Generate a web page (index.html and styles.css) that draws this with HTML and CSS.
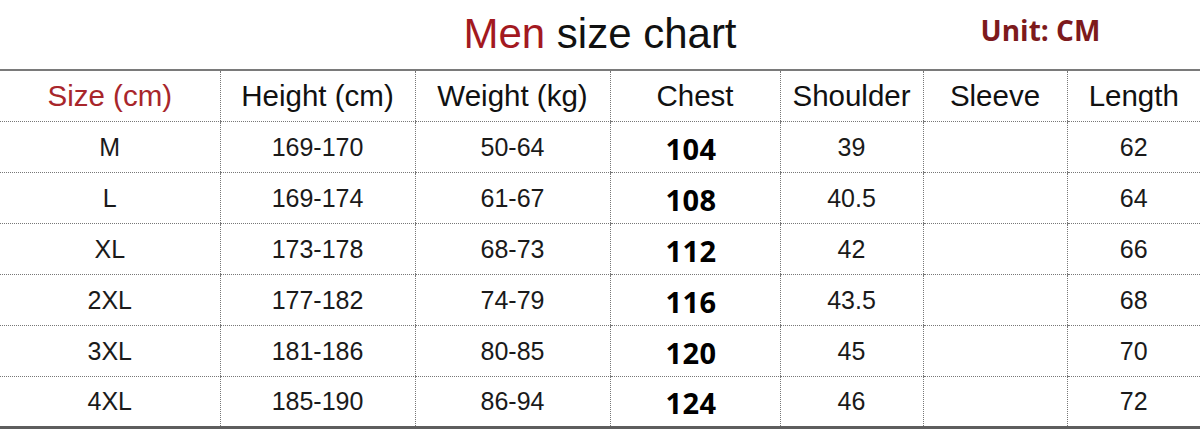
FILE: index.html
```html
<!DOCTYPE html>
<html>
<head>
<meta charset="utf-8">
<link rel="stylesheet" href="styles.css">
</head>
<body>
<div class="page">
  <header class="head">
    <div></div>
    <h1 class="title"><span class="red">Men</span> size chart</h1>
    <div class="unit">Unit: CM</div>
  </header>
  <table class="chart">
    <colgroup>
      <col class="c1"><col class="c2"><col class="c3"><col class="c4"><col class="c5"><col class="c6"><col class="c7">
    </colgroup>
    <thead>
      <tr>
        <th class="first">Size (cm)</th><th>Height (cm)</th><th>Weight (kg)</th><th>Chest</th><th>Shoulder</th><th>Sleeve</th><th>Length</th>
      </tr>
    </thead>
    <tbody>
      <tr><td>M</td><td>169-170</td><td>50-64</td><td class="bold">104</td><td>39</td><td></td><td>62</td></tr>
      <tr><td>L</td><td>169-174</td><td>61-67</td><td class="bold">108</td><td>40.5</td><td></td><td>64</td></tr>
      <tr><td>XL</td><td>173-178</td><td>68-73</td><td class="bold">112</td><td>42</td><td></td><td>66</td></tr>
      <tr><td>2XL</td><td>177-182</td><td>74-79</td><td class="bold">116</td><td>43.5</td><td></td><td>68</td></tr>
      <tr><td>3XL</td><td>181-186</td><td>80-85</td><td class="bold">120</td><td>45</td><td></td><td>70</td></tr>
      <tr><td>4XL</td><td>185-190</td><td>86-94</td><td class="bold">124</td><td>46</td><td></td><td>72</td></tr>
    </tbody>
  </table>
</div>
</body>
</html>
```
FILE: styles.css
```css
html, body {
  margin: 0;
  padding: 0;
  background: #ffffff;
}
.page {
  width: 1200px;
  height: 430px;
  overflow: hidden;
  font-family: "Liberation Sans", Arial, sans-serif;
  color: #111;
}
.head {
  height: 69px;
  display: grid;
  grid-template-columns: 1fr auto 1fr;
  align-items: start;
}
.title {
  margin: 0;
  padding-top: 10px;
  font-weight: normal;
  font-size: 42px;
  line-height: 48px;
  color: #111;
}
.red {
  color: #a3191f;
}
.unit {
  padding-left: 244px;
  padding-top: 13px;
  font-family: "Open Sans", sans-serif;
  font-weight: bold;
  font-size: 28px;
  line-height: 34px;
  color: #7d1a1c;
  white-space: nowrap;
}
.chart {
  width: 1200px;
  table-layout: fixed;
  border-collapse: collapse;
  border-top: 2px solid #7a7a7a;
  border-bottom: 3px solid #5e5e5e;
}
.c1 { width: 220px; }
.c2 { width: 195px; }
.c3 { width: 195px; }
.c4 { width: 170px; }
.c5 { width: 143px; }
.c6 { width: 144px; }
.c7 { width: 133px; }
th, td {
  box-sizing: border-box;
  text-align: center;
  padding: 0;
  border-left: 1px dotted #777;
  border-bottom: 1px dotted #777;
  line-height: 30px;
}
th:first-child, td:first-child {
  border-left: none;
}
tbody tr:last-child td {
  border-bottom: none;
}
th {
  height: 51px;
  font-weight: normal;
  font-size: 29.5px;
  color: #111;
}
th.first {
  color: #a8262b;
}
td {
  height: 51px;
  font-size: 25px;
  color: #1a1a1a;
}
td.bold {
  font-family: "Open Sans", sans-serif;
  font-weight: bold;
  font-size: 29px;
  letter-spacing: 0.5px;
  padding-top: 4px;
  padding-right: 8px;
  color: #000;
}
```
